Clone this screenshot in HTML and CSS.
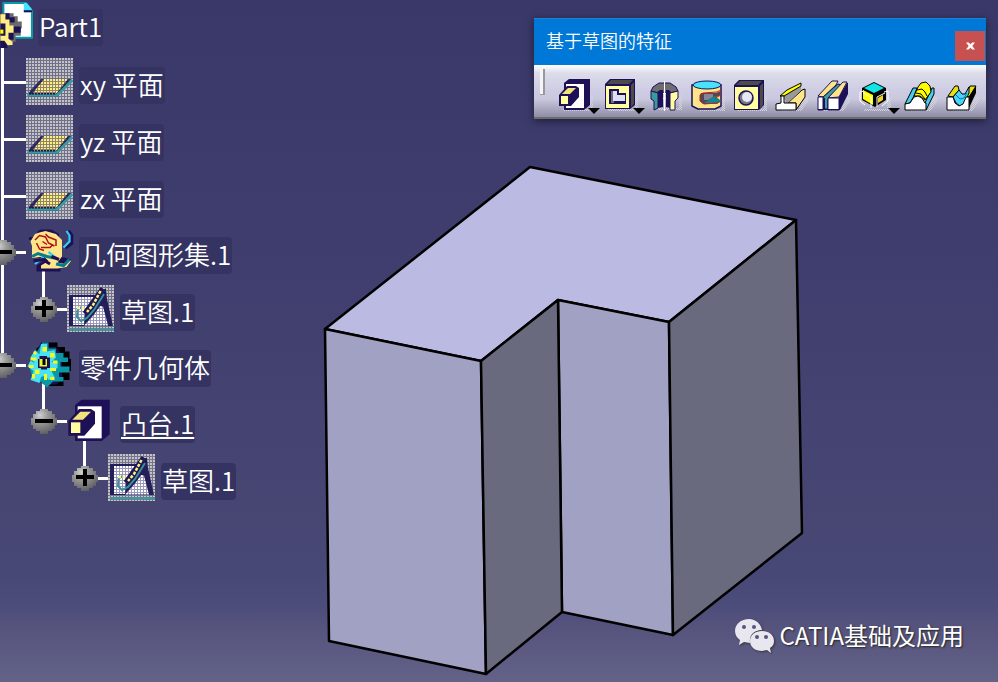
FILE: index.html
```html
<!DOCTYPE html>
<html lang="zh-CN">
<head>
<meta charset="utf-8">
<title>Part1</title>
<link rel="stylesheet" href="styles.css">
</head>
<body>
<svg class="defs" width="0" height="0" aria-hidden="true">
  <defs>
    <pattern id="p-grey" width="6" height="6" patternUnits="userSpaceOnUse"><path fill="#bdbdbd" fill-opacity=".4" d="M0 0h6v6H0z"/><path fill="#c4c4c4" d="M0 0h4v4H0z"/></pattern>
    <pattern id="p-yellow" width="6" height="6" patternUnits="userSpaceOnUse"><path fill="#8d8570" d="M0 0h6v6H0z"/><path fill="#ffee80" d="M0 0h4v4H0z"/></pattern>
    <pattern id="p-white" width="6" height="6" patternUnits="userSpaceOnUse"><path fill="#9a99bb" d="M0 0h6v6H0z"/><path fill="#fff" d="M0 0h4v4H0z"/></pattern>
    <pattern id="p-shade" width="2" height="2" patternUnits="userSpaceOnUse"><path fill="#d4d4dc" d="M0 0h1v1H0zM1 1h1v1H1z"/></pattern>
    <radialGradient id="ball" cx=".35" cy=".25" r=".8"><stop offset="0" stop-color="#d0d0d0"/><stop offset=".35" stop-color="#9b9b9b"/><stop offset="1" stop-color="#5c5c60"/></radialGradient>
    <symbol id="minus" viewBox="0 0 26 26"><path fill="url(#ball)" d="M9 1h8v2h4v3h3v4h2v7h-2v4h-3v2h-4v3H9v-3H5v-2H2v-4H0v-7h2V6h3V3h4z"/><path fill="#000" d="M4 11h18v4H4z"/></symbol>
    <symbol id="plus" viewBox="0 0 26 26"><path fill="url(#ball)" d="M9 1h8v2h4v3h3v4h2v7h-2v4h-3v2h-4v3H9v-3H5v-2H2v-4H0v-7h2V6h3V3h4z"/><path fill="#000" d="M4 10h18v4H4zM11 4h4v17h-4z"/></symbol>
    <symbol id="plane" viewBox="0 0 96 96">
      <path fill="url(#p-grey)" d="M0 0h94v94H0z"/>
      <path fill="#1d1750" fill-opacity=".85" d="M30 42h60L63 78H4l4-12z"/>
      <path fill="url(#p-yellow)" d="M36 42h48L60 72H12z"/>
      <path fill="none" stroke="#3a9aa0" stroke-width="5" d="M2 75h60L93 44"/>
      <path fill="none" stroke="#1d1750" stroke-width="4" stroke-dasharray="4 2" d="M6 71h54"/>
    </symbol>
    <symbol id="sketch" viewBox="0 0 96 96">
      <path fill="url(#p-grey)" d="M0 0h94v94H0z"/>
      <path fill="#241f5a" d="M4 20h58l10-12h6l2 20 12 54H4z"/>
      <path fill="url(#p-white)" d="M12 24h48L36 54l-2 26H12zM66 42l6 1 10 38H34l20-22z"/>
      <path fill="none" stroke="#1d1750" stroke-width="6" d="M70 6L34 56M76 14L42 60"/>
      <path fill="none" stroke="#3a8f98" stroke-width="4" d="M74 18L54 50 40 66l-12 6-8-8 1-14 7-6"/>
      <path fill="none" stroke="#fff38a" stroke-width="5" stroke-dasharray="6 3" d="M67 12L52 40 40 54M20 46h18"/>
      <path stroke="#3a9aa0" stroke-width="6" stroke-dasharray="4 2" d="M6 89h88"/>
    </symbol>
    <symbol id="part" viewBox="0 0 47 47">
      <path fill="#fff" stroke="#079ba8" stroke-width="2" d="M18 3h22l6 8v26H18z"/>
      <path fill="#42e4ff" d="M38 3h3l5 6v3h-8z"/><path fill="#1d1057" d="M38 10h8v2h-8z"/>
      <path fill="#6a6a6a" d="M16 13h12v3h4v5h4v7h-1v7h-5v6h-6v4h-8z"/>
      <path fill="#1d1057" d="M20 13h4v4h5v5h-5v4h11v6h-7v7h-6v8h-7V16h5z"/>
      <path fill="#ffee80" d="M15 14h5v5h4v6h4v7h-5v6l4 3v3h-5l-3-4h-4z"/>
      <path fill="#1d1057" d="M15 23h5v12h-5z"/><path fill="#ff0" d="M15 29h3v4h-3z"/>
    </symbol>
    <symbol id="geoset" viewBox="0 0 32 32">
      <path fill="#1d1057" d="M10 1h7l5 3v4h2v3h-1v8l7 2-7 5v3H7v-4l6-4-8-2 1-4-2-2V8H2V6h4l2-4z"/>
      <path fill="#ffe58a" d="M9 3l4-1 7 2 4 4v11l-3 4 5 1 2-3 2 1-3 4-6 1H10v-2l5-3-3-3-8 1V12l-1-3 3-5z"/>
      <path fill="none" stroke="#b01010" stroke-width="1" d="M6 8l3-3 4 1 2 4 4 2M7 10l2 4 3 1M13 4l2 2 5 2v4M10 13h6l2-2M11 9l3 2"/>
      <path fill="none" stroke="#1d1057" stroke-width="3" d="M28 2l2 3v5l-4 3"/>
      <path fill="none" stroke="#34cdf0" stroke-width="1.500" d="M27 2l2 3v4l-4 4M6 24l6-5M15 16l5 4"/>
      <path fill="none" stroke="#087c8a" stroke-width="2" d="M4 19l4-2 6 2 5 1M20 24l5 1 4-4"/>
      <path fill="none" stroke="#1d1057" stroke-width="2" d="M5 22l6-1 5 3M17 19l5 2"/>
    </symbol>
    <symbol id="gear" viewBox="0 0 32 32">
      <path fill="#000" d="M12 1h9v3h5v3h3v5h1v8h-1v6h-4v4H14l-7-5V5z"/>
      <path fill="#1d1057" d="M10 1h5v3h5l4 5v17l-4 3h-8l-7-5-2-9z"/>
      <path fill="#0898a6" d="M11 1h4v4h5v3h5v3h3v3h-5v3h6v4h-7v3h3v3h-7l-4 4-3-3-7-4-2-8z"/>
      <path fill="#47e2f5" d="M10 2h4v5l5-1 1 5-3 3h4v4l-4 2 2 4-4 2-2-3-3 1-1 4-6-2 2-6-4-3 2-4 3 2-3-4 3-5 3 3z"/>
      <path fill="#f5fb20" d="M11 4h3v3h-3zM3 11h4v2H3zM5 7h2v2H5zM16 8h3v3h-3zM2 16h3v2H2zM6 19h3v3H6zM4 22h2v3H4zM12 22h2v4h-2zM16 18h4v2h-4zM18 13h3v2h-3zM16 24h3v2h-3z"/>
      <path fill="#1d1057" d="M9 10h5v1h2v7h-2v1h-4v-1H8v-6h1z"/>
      <path fill="#eef52a" d="M9 12h5v5H9z"/><path fill="#000" d="M11 12h2v4h-2z"/>
    </symbol>
    <symbol id="pad" viewBox="0 0 34 36">
      <path fill="#1d1057" d="M5 6l5-4h21v26l-6 5H5z"/><path fill="#fff" d="M7 7h18v24H7z"/>
      <path fill="#1d1057" d="M8 9h9l3 2v9l-8 9H0V18z"/>
      <path fill="#ffffa0" d="M2 19h7v8H2z"/><path fill="#f3e27c" d="M3 17l6-6h8l-6 6z"/>
    </symbol>
  </defs>
</svg>

<main class="viewer">
  <svg class="scene" viewBox="0 0 998 682" role="img" aria-label="凸台.1">
    <g stroke="#000" stroke-width="2.500" stroke-linejoin="round">
      <path fill="#bbbae2" d="M530 167L796 220 669 322 558 300 481 361 325 329z"/>
      <path fill="#a1a1c3" d="M325 329L481 361 486 674 329 641zM558 300L669 322 673 635 562 612z"/>
      <path fill="#6a6a7e" d="M481 361L558 300 562 612 486 674zM669 322L796 220 802 533 673 635z"/>
    </g>
  </svg>

  <nav class="tree">
    <div class="row row-root"><svg class="icon"><use href="#part"/></svg><span class="label">Part1</span></div>
    <ul class="branch">
      <li><div class="row"><svg class="icon"><use href="#plane"/></svg><span class="label">xy 平面</span></div></li>
      <li><div class="row"><svg class="icon"><use href="#plane"/></svg><span class="label">yz 平面</span></div></li>
      <li><div class="row"><svg class="icon"><use href="#plane"/></svg><span class="label">zx 平面</span></div></li>
      <li>
        <div class="row row-solid"><button class="toggle" aria-label="折叠"><svg><use href="#minus"/></svg></button><svg class="icon"><use href="#geoset"/></svg><span class="label">几何图形集.1</span></div>
        <ul class="branch">
          <li><div class="row"><button class="toggle" aria-label="展开"><svg><use href="#plus"/></svg></button><svg class="icon"><use href="#sketch"/></svg><span class="label">草图.1</span></div></li>
        </ul>
      </li>
      <li>
        <div class="row row-solid"><button class="toggle" aria-label="折叠"><svg><use href="#minus"/></svg></button><svg class="icon"><use href="#gear"/></svg><span class="label">零件几何体</span></div>
        <ul class="branch">
          <li>
            <div class="row row-solid"><button class="toggle" aria-label="折叠"><svg><use href="#minus"/></svg></button><svg class="icon"><use href="#pad"/></svg><span class="label label-active">凸台.1</span></div>
            <ul class="branch">
              <li><div class="row"><button class="toggle" aria-label="展开"><svg><use href="#plus"/></svg></button><svg class="icon"><use href="#sketch"/></svg><span class="label">草图.1</span></div></li>
            </ul>
          </li>
        </ul>
      </li>
    </ul>
  </nav>

  <section class="palette">
    <header class="palette-title">
      <h1>基于草图的特征</h1>
      <button class="close" aria-label="关闭"><svg viewBox="0 0 10 8"><path fill="#fff" d="M0 0h3l2 2 2-2h3L7 4l3 4H7L5 6 3 8H0l3-4z"/></svg></button>
    </header>
    <div class="tools">
      <span class="grip"></span>
      <button class="tool tool-menu" aria-label="凸台"><svg viewBox="0 0 34 36"><path fill="url(#p-shade)" d="M31 18h3v16H4v-2h27z"/><use href="#pad" width="34" height="36"/></svg></button>
      <button class="tool tool-menu" aria-label="凹槽"><svg viewBox="0 0 34 36">
        <path fill="url(#p-shade)" d="M31 18h3v16H4v-2h27z"/>
        <path fill="#1d1057" d="M1 7l5-5h25v26l-5 4H1z"/><path fill="#4b4b4b" d="M3 7l4-4h22l-4 4zM27 8l3-3v22l-3 3z"/>
        <path fill="#ffffa0" d="M2 9h23v22H2z"/><path fill="#1d1057" d="M5 12h10v4h7v11H5z"/>
        <path fill="#6c6c84" d="M7 14h3v12H7z"/><path fill="#dfdff2" d="M9 14h4v4h8v6H9z"/></svg></button>
      <button class="tool" aria-label="旋转体"><svg viewBox="0 0 34 36">
        <path fill="url(#p-shade)" d="M30 17h3v16H9v-2h21z"/>
        <path fill="#6d6d72" stroke="#1d1057" d="M2 14l2-4 6-4h11l6 4 2 4-8 2h-12z"/>
        <path fill="#1d1057" d="M8 15l3-2h3v17l-5 1zM17 13h3l2 2v16l-5-1z"/>
        <path fill="#3a9aa0" stroke="#1d1057" d="M2 14l7 2v15l-4 2v-9l-3-2z"/><path fill="#ffffa0" stroke="#1d1057" d="M21 16l8-2v7l-3 3v9h-5z"/>
        <path fill="#fff" d="M15 4h1v30h-1zM14 16h3v1h-3zM14 21h3v1h-3z"/></svg></button>
      <button class="tool" aria-label="旋转槽"><svg viewBox="0 0 34 36">
        <path fill="url(#p-shade)" d="M31 18h3v16H8v-2h23z"/>
        <path fill="#ffe58a" stroke="#1d1057" stroke-width="1.500" d="M1 8v21l6 3h17l6-3V8z"/>
        <ellipse cx="16" cy="8" rx="14" ry="4" fill="#47e2ff" stroke="#1d1057"/>
        <path fill="#4b4b58" d="M10 16h15l5-2v4l-5 2 5 4-5 3H12l-3-3v-6z"/><path fill="#078c96" d="M18 23l6-4 6 5-4 3-13-1z"/><path fill="#85859a" d="M13 17h9v3l-5 3h-4z"/>
        <path fill="none" stroke="#d31919" d="M30 13l-4 2-14 1-3 2v6l4 3 13-1 4-2M30 18l-6 3"/></svg></button>
      <button class="tool" aria-label="孔"><svg viewBox="0 0 34 36">
        <path fill="url(#p-shade)" d="M31 18h3v16H4v-2h27z"/>
        <path fill="#1d1057" d="M1 8l5-5h25v25l-5 5H1z"/><path fill="#4b4b4b" d="M3 8l4-4h22l-4 4zM27 9l3-3v22l-3 3z"/>
        <path fill="#ffffa0" d="M2 10h23v22H2z"/><circle cx="13" cy="21" r="7" fill="#777788" stroke="#1d1057" stroke-width="1.500"/><circle cx="14" cy="20" r="5" fill="#e6e6f4"/></svg></button>
      <button class="tool" aria-label="肋"><svg viewBox="0 0 34 36">
        <path fill="url(#p-shade)" d="M28 20h5v5l-7 9H6v-2h18z"/>
        <path fill="#ffe58a" stroke="#000" d="M13 26l14-13 3-1v8l-9 13v-7z"/>
        <path fill="#999" d="M9 19L26 7v6L13 26h-2z"/>
        <path fill="#ff0" stroke="#000" d="M5 19l7-6 14-7v3L9 19z"/>
        <path fill="#fff" stroke="#000" d="M1 33v-6l5-1v-7h3v7h12v7z"/></svg></button>
      <button class="tool" aria-label="开槽"><svg viewBox="0 0 34 36">
        <path fill="url(#p-shade)" d="M30 20h3v5l-7 9H6v-2h18z"/>
        <path fill="#1d1057" d="M22 20l8-14h1v11l-8 16h-1z"/>
        <g stroke="#1d1057" stroke-linejoin="round">
          <path fill="#3f9ca4" d="M6 20L21 7l4 1-14 14v10H6z"/>
          <path fill="#ffe58a" d="M1 19L15 4h6l-2 4L6 20zM11 21L26 5h4l-8 15z"/>
          <path fill="#fff" d="M1 20h5v13H1zM11 21h11v12H11z"/>
        </g>
        <path fill="#1d1057" d="M6 21h2v12H6zM1 32h22v1H1z"/></svg></button>
      <button class="tool tool-menu" aria-label="加强肋"><svg viewBox="0 0 34 36">
        <path fill="url(#p-shade)" d="M28 20h4v14H5v-2h23z"/>
        <path fill="#000" d="M3 11l12-6 12 6v12l-11 7-13-7z"/><path fill="#10e4e4" d="M5 11l10-5 10 5-10 5z"/>
        <path fill="#ff0" d="M4 13l10 5v10L4 22z"/><path fill="#f2d320" d="M19 21l5-3v5l-5 3z"/>
        <path fill="none" stroke="#fff" d="M1 15v9l5 4M1 15l4-1M12 31V20l-8-4M29 14v10l-6 5M29 14l-4 1M18 30V20l8-4"/></svg></button>
      <button class="tool" aria-label="多截面实体"><svg viewBox="0 0 34 36">
        <path fill="url(#p-shade)" d="M28 20h5v5l-7 9H6v-2h18z"/>
        <g stroke="#000" stroke-linejoin="round">
          <path fill="#47cdf0" d="M1 27L9 11h4l-3 8-4 7zM21 26l7-15h2v6l-8 16z"/>
          <path fill="#ff0" d="M10 19l4-9 3-4 5-1 4 4 1 6-6 8-5-4z"/>
          <path fill="#fff" d="M1 33v-6l5-1 4-6 4-1 4 2 3 5h1v7z"/>
        </g>
        <path fill="none" stroke="#000" d="M13 13l5-1 3 3 2 4M12 16l5 1 4 5"/></svg></button>
      <button class="tool" aria-label="已移除的多截面实体"><svg viewBox="0 0 34 36">
        <path fill="url(#p-shade)" d="M28 20h5v5l-7 9H6v-2h18z"/>
        <path fill="#000" d="M22 19l8-10v7l-8 17z"/>
        <g stroke="#000" stroke-linejoin="round">
          <path fill="#e8df18" d="M2 19l7-10h3l1 4-6 7zM19 19l5-10h6l-7 11z"/>
          <path fill="#47d5ff" d="M7 20l6-7 3 4h3l4-7v6l-5 11-4 2-4-3z"/>
          <path fill="#fff" d="M1 33V20h6l2 6 4 3 4-2 3-7h3v13z"/>
        </g>
        <path fill="none" stroke="#08788c" d="M10 18l4 4 4-1 3-5"/></svg></button>
    </div>
  </section>

  <footer class="credit">
    <svg viewBox="0 0 40 34" aria-hidden="true">
      <path fill="#e8e6ef" d="M14 0C6 0 0 5 0 12c0 4 2 7 5 9l-1 5 5-3 6 1C14 16 19 11 27 11 26 5 21 0 14 0z"/>
      <path fill="#e8e6ef" d="M27 12c-7 0-12 4-12 10s5 10 12 10l5-1 4 3-1-5c3-2 4-4 4-7 0-6-5-10-12-10z"/>
      <g fill="#55547d"><circle cx="9" cy="8" r="2"/><circle cx="19" cy="8" r="2"/><circle cx="22" cy="18" r="2"/><circle cx="31" cy="18" r="2"/></g>
    </svg>
    <span>CATIA基础及应用</span>
  </footer>
</main>
</body>
</html>
```

FILE: styles.css
```css
* { box-sizing: border-box; }
body {
  margin: 0;
  font-family: "Noto Sans CJK SC", "Noto Sans", sans-serif;
  color: #fff;
}
button {
  padding: 0;
  border: 0;
  background: none;
  color: inherit;
}
svg { display: block; }
.defs { position: absolute; }

.viewer {
  position: relative;
  min-height: 100vh;
  overflow: hidden;
  background: linear-gradient(#393869 0%, #3f3e6e 40%, #474673 75%, #484876 84%, #4d4d7c 89%, #56547d 92%, #636288 100%);
}
.scene {
  position: absolute;
  inset: 0;
  width: 100%;
  height: 100%;
}

/* Specification tree */
.tree {
  position: relative;
  width: max-content;
  margin-left: -15px;
}
.branch {
  margin: 0 0 0 41px;
  padding: 0;
  list-style: none;
}
.branch > li { position: relative; }
.branch > li::before {
  content: "";
  position: absolute;
  left: -25px;
  top: -12px;
  bottom: 0;
  width: 3px;
  background: #fff;
}
.branch > li:last-child::before {
  bottom: auto;
  height: 36px;
}
.row {
  position: relative;
  display: flex;
  align-items: center;
  gap: 5px;
  height: 57px;
}
.row-solid { height: 56px; }
.row-root {
  height: 53px;
  padding-bottom: 5px;
}
.branch .row::before {
  content: "";
  position: absolute;
  left: -24px;
  top: 50%;
  width: 24px;
  height: 3px;
  margin-top: -1px;
  background: #fff;
}
.icon {
  position: relative;
  z-index: 1;
  width: 48px;
  height: 48px;
}
.toggle {
  position: absolute;
  left: -36px;
  top: 50%;
  z-index: 1;
  width: 26px;
  height: 26px;
  margin-top: -13px;
}
.toggle svg {
  width: 26px;
  height: 26px;
}
.label {
  height: 37px;
  margin-top: 7px;
  padding: 0 1px;
  border-radius: 4px;
  background: #343362;
  font-size: 26px;
  font-weight: 350;
  line-height: 33px;
  white-space: nowrap;
}
.label-active {
  text-decoration: underline;
  text-decoration-thickness: 2px;
  text-underline-offset: 3px;
}

/* Floating toolbar */
.palette {
  position: absolute;
  top: 18px;
  right: 12px;
  box-shadow: 0 2px 8px rgba(0, 0, 0, .5);
}
.palette-title {
  display: flex;
  align-items: flex-end;
  justify-content: space-between;
  height: 47px;
  padding: 0 1px 4px 12px;
  border-top: 1px solid #1883d7;
  background: #0078d7;
}
.palette-title h1 {
  margin: 0;
  align-self: center;
  font-size: 18px;
  font-weight: 350;
  line-height: 24px;
}
.close {
  display: grid;
  place-items: center;
  width: 30px;
  height: 30px;
  background: #c75050;
}
.close svg {
  width: 9px;
  height: 8px;
}
.tools {
  display: flex;
  align-items: flex-start;
  height: 54px;
  padding: 4px 0 0 6px;
  border-bottom: 2px solid #6b6b70;
  background: linear-gradient(#fff 0, #dcdcea 16%, #cfcee4 45%, #c9c8de 65%, #8e8da6 100%);
}
.grip {
  width: 5px;
  height: 26px;
  margin-right: 14px;
  border: solid #999;
  border-width: 0 2px 1px 0;
  background: #f5f5f8;
}
.tool {
  width: 42px;
  height: 48px;
  padding-top: 4px;
}
.tool-menu {
  position: relative;
  width: 45px;
}
.tool:last-child { width: 40px; }
.tool svg {
  width: 34px;
  height: 36px;
}
.tool-menu::after {
  content: "";
  position: absolute;
  left: 29px;
  bottom: 3px;
  border: solid transparent;
  border-width: 6px 6px 0;
  border-top-color: #000;
}

/* Account credit */
.credit {
  position: absolute;
  right: 34px;
  bottom: 28px;
  display: flex;
  align-items: center;
  gap: 5px;
  font-size: 24px;
  line-height: 34px;
  text-shadow: 1px 1px 2px #222;
}
.credit svg {
  width: 40px;
  height: 34px;
  filter: drop-shadow(1px 1px 1px #333);
}
.credit span { padding-bottom: 2px; }
```
